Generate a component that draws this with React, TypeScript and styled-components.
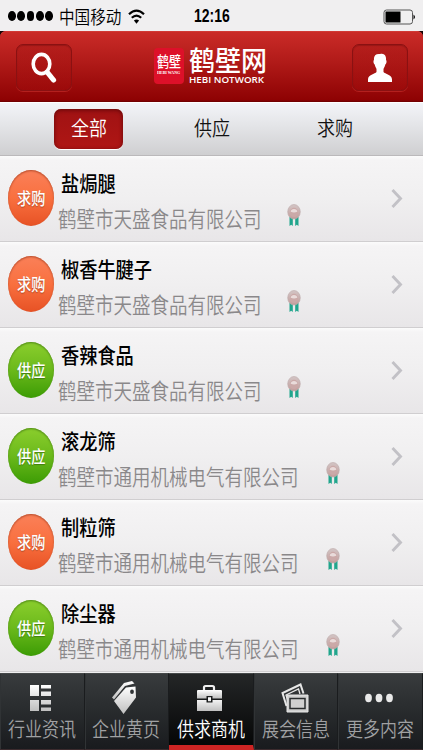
import React from "react";
import styled, { createGlobalStyle } from "styled-components";

const GlobalStyle = createGlobalStyle`
  * { box-sizing: border-box; }
  body {
    margin: 0;
    background: #f0eff0;
    font-family: "Noto Sans CJK SC", sans-serif;
    overflow: hidden;
  }
`;

const Screen = styled.div`
  width: 423px;
  height: 750px;
  display: flex;
  flex-direction: column;
  overflow: hidden;
`;

/* Condensed lettering: the box takes the narrowed width, the glyphs are scaled into it. */
const CondensedBox = styled.span<{ $w: number; $line: number }>`
  display: block;
  flex: none;
  width: ${(p) => p.$w}px;
  height: ${(p) => p.$line}px;
`;

const CondensedText = styled.span<{ $size: number; $line: number; $ratio: number; $weight: number }>`
  display: block;
  width: max-content;
  font-size: ${(p) => p.$size}px;
  line-height: ${(p) => p.$line}px;
  font-weight: ${(p) => p.$weight};
  white-space: nowrap;
  transform: scaleX(${(p) => p.$ratio});
  transform-origin: left center;
`;

type CondensedProps = { text: string; size: number; advance: number; line: number; weight?: number };

const Condensed = ({ text, size, advance, line, weight = 400 }: CondensedProps) => (
  <CondensedBox $w={advance * text.length} $line={line}>
    <CondensedText $size={size} $line={line} $ratio={advance / size} $weight={weight}>
      {text}
    </CondensedText>
  </CondensedBox>
);

const StatusBar = styled.div`
  flex: none;
  height: 31px;
  display: grid;
  grid-template-columns: 194px 1fr auto;
  align-items: center;
  padding-right: 7px;
  background: #f0eff0;
  color: #000;
`;

const Carrier = styled.div`
  display: flex;
  align-items: center;
  padding-left: 8px;
`;

const Signal = styled.div`
  display: flex;
  gap: 1.4px;
  margin-right: 6px;
`;

const SignalDot = styled.i`
  width: 7.9px;
  height: 9.4px;
  border-radius: 50%;
  background: #000;
`;

const WifiIcon = styled.svg`
  margin-left: 7px;
  width: 17px;
  height: 15px;
`;

const Clock = styled.div`
  width: max-content;
  margin-top: 1px;
  font: 700 17.5px/31px "Liberation Sans", sans-serif;
  transform: scaleX(0.8);
  transform-origin: left center;
`;

const BatteryIcon = styled.svg`
  width: 33px;
  height: 16px;
  margin-top: 1px;
`;

const HeaderBack = styled.div`
  flex: none;
  height: 71px;
  background: #170505;
`;

const Header = styled.header`
  height: 71px;
  display: flex;
  align-items: flex-start;
  justify-content: space-between;
  padding: 13px 15px 0 16px;
  border-radius: 6px 6px 0 0;
  background: linear-gradient(#cb2c28, #b01a18 45%, #8e0203 97%, #6b0000);
  box-shadow: inset 0 1px 0 #d13a35;
`;

const HeaderButton = styled.button`
  width: 56px;
  height: 47px;
  padding: 0;
  display: grid;
  place-items: center;
  border: 1px solid #8a1112;
  border-radius: 7px;
  background: linear-gradient(rgba(125, 0, 0, 0.16), rgba(190, 20, 20, 0.12));
  box-shadow: 0 1px 0 rgba(225, 70, 65, 0.4), inset 0 1px 1px rgba(70, 0, 0, 0.25);
`;

const Brand = styled.div`
  display: flex;
  align-items: flex-start;
  gap: 5px;
  padding-top: 4px;
  margin-right: 4px;
  color: #fff;
`;

const BrandMark = styled.div`
  width: 30px;
  height: 36px;
  padding: 4px 0 0 3px;
  border-radius: 4px;
  background: #dd1029;
`;

const MarkCaption = styled.div`
  width: max-content;
  font: 700 5px/5px "Liberation Serif", serif;
  transform: scaleX(0.79);
  transform-origin: left top;
  margin-top: 1px;
`;

const BrandName = styled.div`
  width: 78px;
`;

const BrandLatin = styled.div`
  width: max-content;
  margin-top: 3px;
  font: 600 8.5px/9px "Open Sans", sans-serif;
  transform: scaleX(1.15);
  transform-origin: left center;
`;

const Tabs = styled.nav`
  flex: none;
  height: 54px;
  display: grid;
  grid-template-columns: 54px 69px 177px 69px;
  padding-top: 6px;
  border-top: 1px solid #fff;
  border-bottom: 1px solid #bbb9bb;
  background: linear-gradient(#f3f4f8, #e3e4e7 45%, #cfcfd1);
`;

const Tab = styled.button<{ $active?: boolean }>`
  grid-column: ${(p) => (p.$active ? 2 : "auto")};
  height: 40px;
  padding: 0 0 4px;
  display: flex;
  align-items: center;
  justify-content: center;
  border: 0;
  border-radius: 7px;
  font-family: inherit;
  color: ${(p) => (p.$active ? "#fff" : "#111")};
  background: ${(p) => (p.$active ? "linear-gradient(#a01213, #af1614)" : "none")};
  box-shadow: ${(p) => (p.$active ? "inset 0 1px 4px #620709, 0 1px 0 #fff" : "none")};
`;

const List = styled.main`
  flex: none;
  height: 517px;
  overflow: hidden;
`;

const Row = styled.article`
  height: 86px;
  display: flex;
  align-items: flex-start;
  padding: 14px 20px 0 8px;
  border-bottom: 1px solid #d0ced0;
  background: linear-gradient(#fbfbfb, #f5f4f5 5%, #f0eff0 50%, #e8e6e8);
`;

const Badge = styled.div<{ $kind: Kind }>`
  flex: none;
  width: 46px;
  height: 56px;
  display: grid;
  place-items: center;
  border-radius: 50%;
  color: #fff;
  text-shadow: 0 1px 1px rgba(0, 0, 0, 0.3);
  background: ${(p) =>
    p.$kind === "求购" ? "linear-gradient(#fa8059, #f9703f 50%, #e75225)" : "linear-gradient(#8bce2d, #6bb91b 50%, #3c9c05)"};
  box-shadow: inset 0 1px 2px ${(p) => (p.$kind === "求购" ? "#b34b2a" : "#4c8716")};
`;

const Details = styled.div`
  flex: 1;
  padding-left: 4px;
`;

const Title = styled.div`
  margin: -3px 0 0 3px;
  color: #000;
`;

const Company = styled.div`
  display: flex;
  align-items: flex-start;
  margin-top: 6px;
  color: #8a888a;
`;

const MedalIcon = styled.svg<{ $gap: number }>`
  flex: none;
  width: 14px;
  height: 23px;
  margin: 1px 0 0 ${(p) => p.$gap}px;
`;

const ChevronIcon = styled.svg`
  flex: none;
  width: 12px;
  height: 21px;
  margin-top: 18px;
`;

const BottomBar = styled.nav`
  flex: none;
  height: 77px;
  display: grid;
  grid-template-columns: repeat(5, 1fr);
  background: #222527;
`;

const NavItem = styled.button<{ $active?: boolean }>`
  display: flex;
  flex-direction: column;
  align-items: center;
  padding: 6px 0 0;
  border: 0;
  border-top: 1px solid #454849;
  border-right: 1px solid #1a1c1e;
  border-bottom: ${(p) => (p.$active ? "5px solid #cd2423" : "1px solid #3c2b2e")};
  font-family: inherit;
  color: ${(p) => (p.$active ? "#fff" : "#a0a1a3")};
  background: ${(p) => (p.$active ? "linear-gradient(#242627, #050606)" : "linear-gradient(#383b3d, #282b2d 50%, #191b1e)")};
  box-shadow: ${(p) => (p.$active ? "none" : "inset 1px 0 0 #303335")};
`;

const NavIcon = styled.svg<{ $shift: number }>`
  width: 34px;
  height: 34px;
  margin: 0 0 1px ${(p) => p.$shift}px;
`;

type Kind = "求购" | "供应";
type Listing = { kind: Kind; title: string; company: string };

const listings: Listing[] = [
  { kind: "求购", title: "盐焗腿", company: "鹤壁市天盛食品有限公司" },
  { kind: "求购", title: "椒香牛腱子", company: "鹤壁市天盛食品有限公司" },
  { kind: "供应", title: "香辣食品", company: "鹤壁市天盛食品有限公司" },
  { kind: "供应", title: "滚龙筛", company: "鹤壁市通用机械电气有限公司" },
  { kind: "求购", title: "制粒筛", company: "鹤壁市通用机械电气有限公司" },
  { kind: "供应", title: "除尘器", company: "鹤壁市通用机械电气有限公司" },
];

/* The medal drifts slightly further from longer company names. */
const medalGap = (company: string) => 25 + (company.length - 11) * 1.4;

const Medal = ({ gap }: { gap: number }) => (
  <MedalIcon viewBox="0 0 14 23" $gap={gap}>
    <path d="M2.500 13h3.300v9l-1.600-1.200-1.700 1.200zM8.200 13h3.300v9l-1.700-1.200L8.200 22z" fill="#20a58c" />
    <ellipse cx="7" cy="7.800" rx="6.300" ry="7.300" fill="url(#medal)" stroke="#bcaaa9" strokeWidth=".6" />
    <ellipse cx="7" cy="8.400" rx="4" ry="4.600" fill="#cba9a8" />
    <path d="M3.700 7.800Q4 5 7 5t3.300 2.800q-3.300 1.200-6.600 0z" fill="#e9dbda" />
  </MedalIcon>
);

const icons = {
  news: (
    <path
      fill="url(#metal)"
      d="M7 5h9v11H7zM18 5h10v3.500H18zM18 11.500h10V16H18zM7 20h9v11H7zM18 20h10v4.500H18zM18 27.500h10V31H18z"
    />
  ),
  tag: (
    <g>
      <path fill="url(#metal)" d="M5 17.500 17 3l8-2 2.500 2.500L18 6 7 19.500z" />
      <path
        fill="url(#metal)"
        fillRule="evenodd"
        d="M7 21 19 7.500l9.500-1 .5 11L16.500 34zM25 9.500a1.900 2.300 0 1 0 0 4.600 1.900 2.300 0 0 0 0-4.600z"
      />
    </g>
  ),
  briefcase: (
    <g>
      <path d="M12 11V7.500Q12 6 13.500 6h7Q22 6 22 7.500V11" fill="none" stroke="#eee" strokeWidth="2.200" />
      <path fill="url(#metal)" d="M6 10h23q1 0 1 1v7.500H20.500V16h-6v2.500H5V11q0-1 1-1z" />
      <path fill="url(#metal)" d="M5 20h9.500v2.500h6V20H30v11H5zM16 17.300h3v4h-3z" />
    </g>
  ),
  photos: (
    <g fill="none" stroke="#e7e7e7">
      <path d="m9.500 26-4-13L23.500 4.500l3 9" strokeWidth="2" />
      <path d="m11 21-2-6 12.500-6 1.500 5" strokeWidth="1.300" />
      <path d="M10 15h21v17H10z" fill="#d0d0d0" />
      <path d="M13 18.500h15v10H13z" stroke="#292c2e" strokeWidth="1.500" />
    </g>
  ),
  more: (
    <g fill="#e9e9e9">
      <ellipse cx="6.500" cy="18" rx="3.400" ry="4.200" />
      <ellipse cx="17" cy="18" rx="3.400" ry="4.200" />
      <ellipse cx="27.500" cy="18" rx="3.400" ry="4.200" />
    </g>
  ),
};

const navItems: { label: string; icon: keyof typeof icons; shift: number; active?: boolean }[] = [
  { label: "行业资讯", icon: "news", shift: -4 },
  { label: "企业黄页", icon: "tag", shift: -4 },
  { label: "供求商机", icon: "briefcase", shift: -4, active: true },
  { label: "展会信息", icon: "photos", shift: -4 },
  { label: "更多内容", icon: "more", shift: -3 },
];

const GradientDefs = styled.svg`
  display: block;
  width: 0;
  height: 0;
`;

const Gradients = () => (
  <GradientDefs aria-hidden>
    <defs>
      <linearGradient id="metal" x2="0" y2="1">
        <stop stopColor="#fff" />
        <stop offset="1" stopColor="#bfbfbf" />
      </linearGradient>
      <linearGradient id="medal" x2="0" y2="1">
        <stop stopColor="#d3c5c5" />
        <stop offset="1" stopColor="#c29d9b" />
      </linearGradient>
    </defs>
  </GradientDefs>
);

export default function App() {
  return (
    <Screen>
      <GlobalStyle />
      <Gradients />
      <StatusBar>
        <Carrier>
          <Signal>
            {[0, 1, 2, 3, 4].map((n) => (
              <SignalDot key={n} />
            ))}
          </Signal>
          <Condensed text="中国移动" size={18} advance={15.6} line={29} weight={350} />
          <WifiIcon viewBox="0 0 17 15">
            <path d="M1 5.200Q8.500-1.800 16 5.200M3.800 8.800q4.700-4.400 9.400 0" fill="none" stroke="#000" strokeWidth="2.200" />
            <path d="M5.900 11.500q2.600-2.100 5.200 0L8.500 14.700z" />
          </WifiIcon>
        </Carrier>
        <Clock>12:16</Clock>
        <BatteryIcon viewBox="0 0 33 16">
          <rect x="1" y="1" width="28.500" height="14" rx="2.500" fill="none" stroke="#555" />
          <path d="M2.500 2.500h15v11h-15z" />
          <path d="M30.500 5.500q3 2.500 0 5z" />
        </BatteryIcon>
      </StatusBar>

      <HeaderBack>
        <Header>
          <HeaderButton aria-label="搜索">
            <svg width="28" height="32" viewBox="0 0 28 32">
              <ellipse cx="11.500" cy="12" rx="8.300" ry="9.600" fill="none" stroke="#fff" strokeWidth="3.600" />
              <path d="m17.500 20.500 6 7.500" stroke="#fff" strokeWidth="5.200" strokeLinecap="round" />
            </svg>
          </HeaderButton>
          <Brand>
            <BrandMark>
              <Condensed text="鹤壁" size={14.5} advance={12} line={17} weight={500} />
              <MarkCaption>HEBI WANG</MarkCaption>
            </BrandMark>
            <BrandName>
              <Condensed text="鹤壁网" size={27} advance={26} line={24} weight={500} />
              <BrandLatin>HEBI NOTWORK</BrandLatin>
            </BrandName>
          </Brand>
          <HeaderButton aria-label="我的">
            <svg width="26" height="30" viewBox="0 0 26 30">
              <path
                fill="#fff"
                d="M13 1c4.500-1.500 6.500 2 6 6 1 .5.500 4-.700 4.500-.400 2.500-1.600 3.500-1.800 4.500v3c1.500 2 8.500 2.500 8.500 7.500V29H1v-2.500C1 21.500 8 21 9.500 19v-3c-.2-1-1.400-2-1.800-4.500C6.500 11 6 7.500 7 7 6.500 3 8.500.500 13 1z"
              />
            </svg>
          </HeaderButton>
        </Header>
      </HeaderBack>

      <Tabs>
        <Tab $active>
          <Condensed text="全部" size={20.500} advance={18} line={30} weight={350} />
        </Tab>
        <Tab>
          <Condensed text="供应" size={20.500} advance={18} line={30} weight={350} />
        </Tab>
        <Tab>
          <Condensed text="求购" size={20.500} advance={18} line={30} weight={350} />
        </Tab>
      </Tabs>

      <List>
        {listings.map((item) => (
          <Row key={item.title}>
            <Badge $kind={item.kind}>
              <Condensed text={item.kind} size={16.500} advance={14.200} line={24} weight={500} />
            </Badge>
            <Details>
              <Title>
                <Condensed text={item.title} size={21} advance={18.200} line={30} weight={500} />
              </Title>
              <Company>
                <Condensed text={item.company} size={21.500} advance={18.500} line={30} weight={350} />
                <Medal gap={medalGap(item.company)} />
              </Company>
            </Details>
            <ChevronIcon viewBox="0 0 12 21">
              <path d="m1.500 2 8 8.500-8 8.500" fill="none" stroke="#c2c1c6" strokeWidth="2.900" />
            </ChevronIcon>
          </Row>
        ))}
      </List>

      <BottomBar>
        {navItems.map((item) => (
          <NavItem key={item.label} $active={item.active}>
            <NavIcon viewBox="0 0 34 34" $shift={item.shift}>
              {icons[item.icon]}
            </NavIcon>
            <Condensed text={item.label} size={20} advance={17} line={28} weight={350} />
          </NavItem>
        ))}
      </BottomBar>
    </Screen>
  );
}
